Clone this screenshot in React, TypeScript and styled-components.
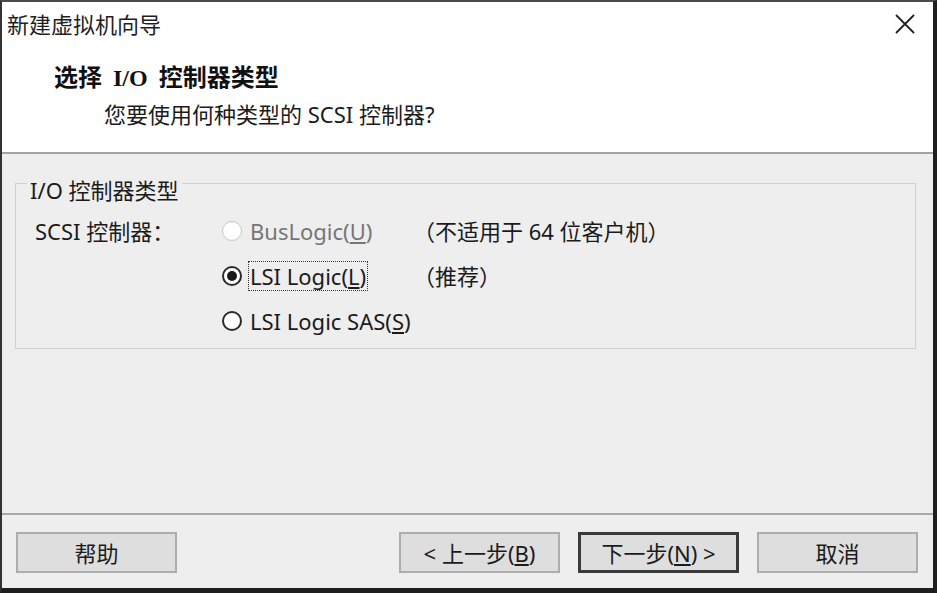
import styled, { createGlobalStyle } from 'styled-components';

const GlobalStyle = createGlobalStyle`
  html, body {
    margin: 0;
    padding: 0;
    background: #ffffff;
    overflow: hidden;
  }
  * {
    box-sizing: border-box;
  }
`;

const uiFont = `"Noto Sans", "Noto Sans CJK SC", sans-serif`;

const Window = styled.div`
  width: 937px;
  height: 593px;
  display: flex;
  flex-direction: column;
  border-top: 2px solid #4a4a4a;
  border-left: 2px solid #333333;
  border-right: 4px solid #1e1e1e;
  border-bottom: 5px solid #1e1e1e;
  font-family: ${uiFont};
  color: #1b1b1b;
  background: #eeeeee;
`;

const Header = styled.header`
  flex: none;
  height: 152px;
  background: #ffffff;
  border-bottom: 2px solid #a3a3a3;
  display: flex;
  flex-direction: column;
`;

const TitleBar = styled.div`
  height: 44px;
  display: flex;
  align-items: center;
  justify-content: space-between;
  padding: 0 18px 0 5px;
`;

const WindowTitle = styled.div`
  font-size: 22px;
  line-height: 26px;
  color: #1f1f1f;
`;

const CloseButton = styled.button`
  width: 20px;
  height: 20px;
  padding: 0;
  border: none;
  background: transparent;
  display: flex;
  color: #222222;
`;

const Heading = styled.h1`
  margin: 17px 0 0 52px;
  font-family: "Liberation Serif", "Noto Sans CJK SC", serif;
  font-size: 24px;
  font-weight: bold;
  line-height: 30px;
  word-spacing: 5px;
  color: #111111;
`;

const Subtitle = styled.div`
  margin: 7px 0 0 102px;
  font-size: 22px;
  line-height: 28px;
`;

const Body = styled.main`
  flex: none;
  height: 361px;
  padding: 29px 17px 0 13px;
  border-bottom: 2px solid #a9a9a9;
`;

const GroupBox = styled.section`
  border: 1px solid #d0d0d0;
  padding: 0 0 5px 19px;
`;

const GroupLegend = styled.div`
  display: block;
  width: fit-content;
  margin: -5px 0 0 -8px;
  padding: 0 3px;
  font-size: 22px;
  line-height: 22px;
  background: #eeeeee;
`;

const OptionGrid = styled.div`
  margin-top: 8px;
  display: grid;
  grid-template-columns: 187px 191px 1fr;
  grid-template-rows: 44px 46px 44px;
  align-items: center;
  font-size: 22px;
  line-height: 26px;
`;

const FieldLabel = styled.div`
  grid-column: 1;
`;

const Option = styled.label<{ $row: number; $wide?: boolean; $disabled?: boolean }>`
  grid-column: ${({ $wide }) => ($wide ? '2 / span 2' : '2')};
  grid-row: ${({ $row }) => $row};
  display: flex;
  align-items: center;
  gap: 6px;
  white-space: nowrap;
  color: ${({ $disabled }) => ($disabled ? '#767676' : '#1b1b1b')};
`;

const Radio = styled.span<{ $checked?: boolean; $disabled?: boolean }>`
  width: 20px;
  height: 20px;
  border-radius: 50%;
  flex: none;
  display: flex;
  align-items: center;
  justify-content: center;
  background: #ffffff;
  border: ${({ $disabled }) => ($disabled ? '1.5px solid #c6c6c6' : '2px solid #2a2a2a')};

  &::after {
    content: '';
    width: 10px;
    height: 10px;
    border-radius: 50%;
    background: #1a1a1a;
    display: ${({ $checked }) => ($checked ? 'block' : 'none')};
  }
`;

const OptionText = styled.span<{ $focused?: boolean }>`
  padding: 1px 1px;
  border: 1px ${({ $focused }) => ($focused ? 'dotted #333333' : 'solid transparent')};
  line-height: 26px;
`;

const Note = styled.div<{ $row: number }>`
  grid-column: 3;
  grid-row: ${({ $row }) => $row};
  white-space: nowrap;
`;

const Footer = styled.footer`
  flex: 1;
  display: flex;
  justify-content: space-between;
  align-items: flex-start;
  padding: 17px 15px 0 14px;
`;

const ButtonGroup = styled.div`
  display: flex;
  gap: 18px;
`;

const Button = styled.button<{ $primary?: boolean }>`
  width: 161px;
  height: 41px;
  background: #dedede;
  border: ${({ $primary }) => ($primary ? '3px solid #3a3a3a' : '2px solid #adadad')};
  font-family: ${uiFont};
  font-size: 22px;
  line-height: 26px;
  color: #1b1b1b;
  padding: 0;
  white-space: nowrap;
`;

const CloseIcon = () => (
  <svg width="20" height="20" viewBox="0 0 20 20" fill="none">
    <path d="M1 1 L19 19 M19 1 L1 19" stroke="currentColor" strokeWidth="1.8" />
  </svg>
);

export default function App() {
  return (
    <>
      <GlobalStyle />
      <Window>
        <Header>
          <TitleBar>
            <WindowTitle>新建虚拟机向导</WindowTitle>
            <CloseButton aria-label="关闭">
              <CloseIcon />
            </CloseButton>
          </TitleBar>
          <Heading>选择 I/O 控制器类型</Heading>
          <Subtitle>您要使用何种类型的 SCSI 控制器?</Subtitle>
        </Header>

        <Body>
          <GroupBox>
            <GroupLegend>I/O 控制器类型</GroupLegend>
            <OptionGrid>
              <FieldLabel>SCSI 控制器：</FieldLabel>
              <Option $row={1} $disabled>
                <Radio $disabled />
                <OptionText>
                  BusLogic(<u>U</u>)
                </OptionText>
              </Option>
              <Note $row={1}>（不适用于 64 位客户机）</Note>

              <Option $row={2}>
                <Radio $checked />
                <OptionText $focused>
                  LSI Logic(<u>L</u>)
                </OptionText>
              </Option>
              <Note $row={2}>（推荐）</Note>

              <Option $row={3} $wide>
                <Radio />
                <OptionText>
                  LSI Logic SAS(<u>S</u>)
                </OptionText>
              </Option>
            </OptionGrid>
          </GroupBox>
        </Body>

        <Footer>
          <Button>帮助</Button>
          <ButtonGroup>
            <Button>
              &lt; 上一步(<u>B</u>)
            </Button>
            <Button $primary>
              下一步(<u>N</u>) &gt;
            </Button>
            <Button>取消</Button>
          </ButtonGroup>
        </Footer>
      </Window>
    </>
  );
}
